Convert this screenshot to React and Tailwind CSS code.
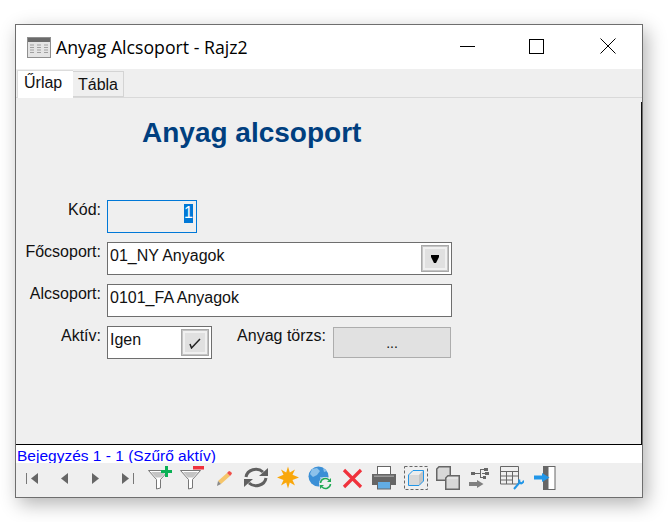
import React from "react";

const sans = "font-['Liberation_Sans',Arial,sans-serif]";

function NavIcon({ kind }) {
  return (
    <svg width="24" height="24" viewBox="0 0 24 24">
      {kind === "first" && (
        <>
          <rect x="6" y="7" width="1" height="11" fill="#777" />
          <path d="M11 12.5 L18 7 V18 Z" fill="#666" />
        </>
      )}
      {kind === "prev" && <path d="M9 12.5 L16 7 V18 Z" fill="#666" />}
      {kind === "next" && <path d="M15 12.5 L8 7 V18 Z" fill="#666" />}
      {kind === "last" && (
        <>
          <path d="M13 12.5 L6 7 V18 Z" fill="#666" />
          <rect x="17" y="7" width="1" height="11" fill="#777" />
        </>
      )}
    </svg>
  );
}

function FilterIcon({ kind }) {
  return (
    <svg width="24" height="24" viewBox="0 0 24 24">
      <path d="M0.5 4.5 H20.5 L12.5 13.5 V22 L8.5 23 V13.5 Z" fill="#fff" stroke="#777" strokeWidth="1" />
      <path d="M3 6 H18 L13 11.5 H8 Z" fill="#c4c4c4" />
      {kind === "add" ? (
        <path d="M13 4 H17 V0 H20 V4 H24 V7 H20 V11 H17 V7 H13 Z" fill="#0ab055" />
      ) : (
        <rect x="13" y="0" width="11" height="3.5" fill="#f0323c" />
      )}
    </svg>
  );
}

function Tool({ children }) {
  return <div className="flex h-6 w-8 items-center justify-center">{children}</div>;
}

function Toolbar() {
  return (
    <div className="flex h-[34px] items-start bg-[#efefef] pt-[3px]">
      <Tool><NavIcon kind="first" /></Tool>
      <Tool><NavIcon kind="prev" /></Tool>
      <Tool><NavIcon kind="next" /></Tool>
      <Tool><NavIcon kind="last" /></Tool>
      <Tool><FilterIcon kind="add" /></Tool>
      <Tool><FilterIcon kind="remove" /></Tool>
      <Tool>
        <svg width="24" height="24" viewBox="0 0 24 24">
          <path d="M6 15 L15 7 L18 10 L9 18 Z" fill="#f5c56a" />
          <path d="M15 7 L17 5 Q18 5 20 7 Q20 8 18 10 Z" fill="#f0504a" />
          <path d="M6 15 L9 18 L5 20 Z" fill="#8a8a8a" />
        </svg>
      </Tool>
      <Tool>
        <svg width="24" height="24" viewBox="0 0 24 24" fill="none" stroke="#606060" strokeWidth="3">
          <path d="M2 11 A10 9 0 0 1 19 6" />
          <path d="M22 12 A10 9 0 0 1 5 17" />
          <path d="M24 2 V10 H15 Z" fill="#606060" stroke="none" />
          <path d="M0 21 V13 H9 Z" fill="#606060" stroke="none" />
        </svg>
      </Tool>
      <Tool>
        <svg width="24" height="24" viewBox="0 0 24 24">
          <path d="M12 0.5 L13.8 6.5 L19 3.5 L16.5 8.7 L23 11.5 L16.5 14 L19 19.5 L13.8 16.5 L12 22.5 L10.2 16.5 L5 19.5 L7.5 14 L1 11.5 L7.5 8.7 L5 3.5 L10.2 6.5 Z" fill="#f9a70b" />
        </svg>
      </Tool>
      <Tool>
        <svg width="24" height="24" viewBox="0 0 24 24">
          <circle cx="10.5" cy="10.5" r="10" fill="#3b8fd6" />
          <path d="M4 3 L9 2 L12 5 L9 9 L5 11 L2 8 Z M12 11 L18 11 L17 16 L13 19 Z M15 2 L19 5 L16 6 Z" fill="#8cc1ea" />
          <circle cx="17.5" cy="17.5" r="6.5" fill="#efefef" />
          <path d="M12.5 17 A5 5 0 0 1 21 14" fill="none" stroke="#22a955" strokeWidth="1.6" />
          <path d="M22.5 18 A5 5 0 0 1 14 21" fill="none" stroke="#22a955" strokeWidth="1.6" />
          <path d="M23 12 V16 H19 Z M12 23 V19 H16 Z" fill="#22a955" />
        </svg>
      </Tool>
      <Tool>
        <svg width="24" height="24" viewBox="0 0 24 24" fill="none" stroke="#f0323c" strokeWidth="3.2">
          <path d="M4 4 L21 21 M21 4 L4 21" />
        </svg>
      </Tool>
      <Tool>
        <svg width="24" height="24" viewBox="0 0 24 24">
          <rect x="5.5" y="0.5" width="13" height="8" fill="#fff" stroke="#666" />
          <path d="M0 8 H24 V19 H19 V15 H5 V19 H0 Z" fill="#666" />
          <rect x="2" y="9.5" width="20" height="1.5" fill="#999" />
          <rect x="5.5" y="15.5" width="13" height="7.5" fill="#62ade4" stroke="#666" />
        </svg>
      </Tool>
      <Tool>
        <svg width="24" height="24" viewBox="0 0 24 24">
          <rect x="0.5" y="0.5" width="23" height="23" fill="none" stroke="#666" strokeDasharray="3 2" />
          <path d="M4.5 9 L9 4.5 H19.5 V15 L15 19.5 H4.5 Z" fill="#d8d8d8" />
          <path d="M4.5 9 L9 4.5 H19.5 L15 9 Z" fill="#ededed" />
          <path d="M15 9 V19.5 L19.5 15 V4.5 Z" fill="#c4c4c4" />
          <path d="M4.5 9 L9 4.5 H19.5 V15 L15 19.5 H4.5 Z" fill="none" stroke="#2196e8" />
        </svg>
      </Tool>
      <Tool>
        <svg width="24" height="24" viewBox="0 0 24 24">
          <path d="M0.75 3 L3 0.75 H14.25 V14.25 H0.75 Z" fill="#d8d8d8" stroke="#666" strokeWidth="1.5" />
          <path d="M9.75 12 L12 9.75 H23.25 V23.25 H9.75 Z" fill="#d8d8d8" stroke="#666" strokeWidth="1.5" />
          <path d="M11 12 H22" stroke="#efefef" />
        </svg>
      </Tool>
      <Tool>
        <svg width="24" height="24" viewBox="0 0 24 24" fill="#666">
          <rect x="3" y="6" width="4" height="3" />
          <rect x="7" y="7" width="5" height="1" />
          <rect x="12" y="3" width="1" height="9" />
          <rect x="13" y="3" width="3" height="1" />
          <rect x="13" y="11" width="3" height="1" />
          <rect x="16" y="2" width="4" height="3" />
          <rect x="17" y="6" width="4" height="3" />
          <rect x="14" y="7" width="3" height="1" />
          <rect x="15" y="10" width="3" height="3" />
          <path d="M1 16 H9 V14 L15.5 18 L9 22 V20 H1 Z" fill="#808080" />
        </svg>
      </Tool>
      <Tool>
        <svg width="24" height="24" viewBox="0 0 24 24">
          <path d="M0.5 0.5 H18.5 V18 H0.5 Z M0.5 5.5 H18.5 M0.5 10 H18.5 M0.5 14 H13 M6.5 5.5 V18 M12.5 5.5 V18" fill="none" stroke="#666" />
          <path d="M14 23 L20 16 M19.5 13.5 Q18.5 16 21 17.5 Q23 17 24 14.5" fill="none" stroke="#2196e8" strokeWidth="2" />
        </svg>
      </Tool>
      <Tool>
        <svg width="24" height="24" viewBox="0 0 24 24">
          <rect x="11.5" y="0.5" width="11.5" height="23" fill="#fff" stroke="#666" />
          <rect x="11" y="0" width="5.5" height="24" fill="#666" />
          <path d="M2 9.5 H10 V7 L17.5 11.5 L10 16 V13.5 H2 Z" fill="#2196e8" />
        </svg>
      </Tool>
    </div>
  );
}

function Label({ children }) {
  return <span className="w-[80px] whitespace-nowrap pt-[1px] text-right">{children}</span>;
}

function SmallBtn({ className, children }) {
  return (
    <div className={`mr-[2px] flex h-[27px] w-[28px] items-center justify-center border border-[#a8a8a8] bg-[#e0e0e0] shadow-[inset_0_0_0_1px_#c4c4c4,inset_0_0_0_3px_#f0f0f0] ${className}`}>
      {children}
    </div>
  );
}

function App() {
  return (
    <div className={`h-[522px] w-[672px] overflow-hidden bg-white pl-[15px] pt-6 text-[16px] leading-[18px] text-[#111] ${sans}`}>
      <div className="flex h-[474px] w-[628px] flex-col border border-[#6e6e6e] bg-white shadow-[4px_6px_18px_rgba(0,0,0,0.3)]">
        {/* title bar */}
        <div className="flex h-11 shrink-0 items-center bg-white pl-[11px]">
          <svg width="24" height="21" viewBox="0 0 24 21">
            <rect x="0.5" y="0.5" width="23" height="20" fill="#e4e4e4" stroke="#8f8f8f" />
            <rect x="1" y="1" width="22" height="4" fill="#6a6a6a" />
            <path d="M3 8 H7 M3 10.5 H7 M3 13 H7 M3 15.5 H7 M10 8 H14 M10 10.5 H14 M10 13 H14 M10 15.5 H14 M17 8 H21 M17 10.5 H21 M17 13 H21 M17 15.5 H21" stroke="#a0a0a0" />
          </svg>
          <span className="ml-[5px] font-['Open_Sans',sans-serif] text-[17.7px] text-black">Anyag Alcsoport - Rajz2</span>
          <div className="ml-[197px] flex h-full items-center pb-[2px]">
            <div className="flex w-[46px] justify-center"><div className="h-px w-[15px] bg-black" /></div>
            <div className="ml-[23px] flex w-[46px] justify-center"><div className="h-[15px] w-[15px] border border-black" /></div>
            <div className="ml-[25px] flex w-[46px] justify-center">
              <svg width="16" height="16" viewBox="0 0 16 16" stroke="#000" fill="none"><path d="M0.5 0.5 L15.5 15.5 M15.5 0.5 L0.5 15.5" /></svg>
            </div>
          </div>
        </div>

        {/* tabs */}
        <div className="flex h-7 shrink-0 items-end bg-[#efefef] pl-[1px]">
          <div className="z-10 mb-[-1px] flex h-7 w-[56px] border-l border-t border-[#dcdcdc] bg-white pl-[6px] pt-[3px]">Űrlap</div>
          <div className="flex h-[26px] w-[51px] justify-center border border-l-0 border-[#d4d4d4] pt-[4px]">Tábla</div>
        </div>

        {/* form */}
        <div className="flex min-h-0 flex-1 border-t border-t-[#d9d9d9] bg-[#efefef]">
          <div className="min-w-0 flex-1 pl-[5px]">
            <h1 className="ml-[121px] mt-[18px] text-[28px] font-bold leading-[34px] text-[#003f7f]">Anyag alcsoport</h1>
            <div className="mt-[50px] flex h-[33px] gap-[6px]">
              <Label>Kód:</Label>
              <div className="flex h-[33px] w-[90px] justify-end border border-[#0078d7] pr-[3px] pt-[3px]">
                <span className="h-[19px] bg-[#0078d7] text-white">1</span>
              </div>
            </div>
            <div className="mt-[9px] flex h-[33px] gap-[6px]">
              <Label>Főcsoport:</Label>
              <div className="flex h-[33px] w-[345px] items-start justify-between border border-[#6e6e6e] bg-white pl-[2px]">
                <span className="pt-[4px]">01_NY Anyagok</span>
                <SmallBtn className="mt-[2px]">
                  <svg width="8" height="8" viewBox="0 0 8 8"><path d="M0 0 H8 V2 L5 8 H3 L0 2 Z" fill="#000" /></svg>
                </SmallBtn>
              </div>
            </div>
            <div className="mt-[9px] flex h-[33px] gap-[6px]">
              <Label>Alcsoport:</Label>
              <div className="h-[33px] w-[345px] border border-[#6e6e6e] bg-white pl-[2px] pt-[4px]">0101_FA Anyagok</div>
            </div>
            <div className="mt-[9px] flex h-[33px] gap-[6px]">
              <Label>Aktív:</Label>
              <div className="flex h-[33px] w-[105px] items-start justify-between border border-[#6e6e6e] bg-white pl-[2px]">
                <span className="pt-[4px]">Igen</span>
                <SmallBtn className="mt-[2px]">
                  <svg width="12" height="12" viewBox="0 0 12 12" fill="none" stroke="#222" strokeWidth="1.5"><path d="M1 7 L2.5 11 L11 2" /></svg>
                </SmallBtn>
              </div>
              <span className="ml-[19px] w-[89px] whitespace-nowrap pt-[1px] text-right">Anyag törzs:</span>
              <div className="ml-px mt-[1px] flex h-[31px] w-[118px] justify-center border border-[#adadad] bg-[#e1e1e1] pt-[6px] text-[14px]">...</div>
            </div>
          </div>
          <div className="mt-1 w-px bg-[#111]" />
        </div>

        {/* status */}
        <div className="h-[19px] shrink-0 overflow-hidden whitespace-nowrap border-t border-t-black bg-white pl-[1px] pt-[2px] text-[15.5px] text-[#0000ff]">Bejegyzés 1 - 1 (Szűrő aktív)</div>
        <Toolbar />
      </div>
    </div>
  );
}

export default App;
